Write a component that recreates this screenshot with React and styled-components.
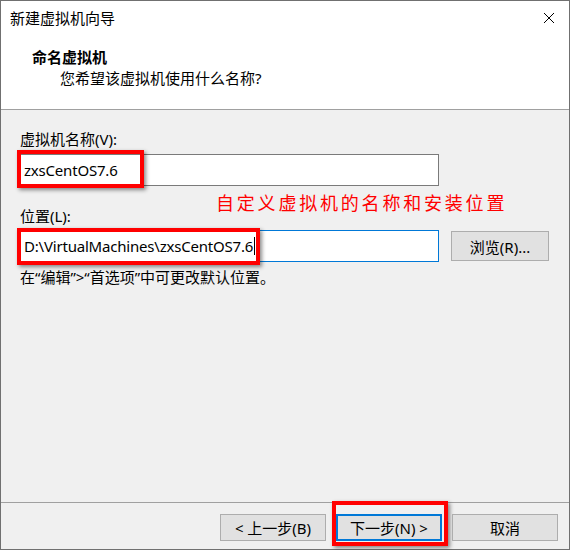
import styled, { createGlobalStyle } from "styled-components";

const GlobalStyle = createGlobalStyle`
  html, body {
    margin: 0;
    padding: 0;
    background: #ffffff;
  }
  body {
    font-family: "Noto Sans", "Noto Sans CJK SC", sans-serif;
    font-size: 15px;
    color: #000;
  }
`;

const Window = styled.div`
  width: 570px;
  height: 550px;
  box-sizing: border-box;
  border: 1px solid #707070;
  display: flex;
  flex-direction: column;
  background: #f0f0f0;
`;

const Header = styled.div`
  background: #ffffff;
  height: 108px;
  border-bottom: 1px solid #a0a0a0;
`;

const TitleBar = styled.div`
  height: 33px;
  display: flex;
  align-items: center;
  justify-content: space-between;
  padding: 0 14px 0 9px;
`;

const Title = styled.span`
  font-size: 15px;
  line-height: 20px;
`;

const Heading = styled.div`
  margin: 13px 0 0 31px;
  font-weight: 700;
  line-height: 20px;
`;

const Subtitle = styled.div`
  margin: 1px 0 0 59px;
  line-height: 20px;
`;

const Body = styled.div`
  position: relative;
  flex: 1;
  padding: 19px 20px 0 19px;
  display: flex;
  flex-direction: column;
`;

const Label = styled.div`
  line-height: 20px;
  margin-top: ${(p) => p.gap || 0}px;
`;

const FieldRow = styled.div`
  display: flex;
  align-items: center;
  gap: 12px;
  margin-top: ${(p) => p.gap || 0}px;
`;

const Field = styled.div`
  position: relative;
  width: 419px;
  height: 32px;
  box-sizing: border-box;
  border: 1px solid ${(p) => (p.focused ? "#0078d7" : "#7a7a7a")};
  background: #fff;
  display: flex;
  align-items: center;
  padding-left: 3px;
  line-height: 20px;
  letter-spacing: -0.2px;
`;

const Caret = styled.span`
  display: inline-block;
  width: 1px;
  height: 18px;
  background: #000;
  margin-left: 1px;
`;

const Button = styled.button`
  position: relative;
  width: ${(p) => p.width || 106}px;
  height: ${(p) => p.height || 27}px;
  box-sizing: border-box;
  background: #e1e1e1;
  border: ${(p) => (p.primary ? "2px solid #0078d7" : "1px solid #adadad")};
  font-family: inherit;
  font-size: 15px;
  color: #000;
  padding: 0;
  display: flex;
  align-items: center;
  justify-content: center;
`;

const Hint = styled.div`
  line-height: 20px;
  margin-top: 5px;
`;

const Footer = styled.div`
  height: 47px;
  border-top: 1px solid #a0a0a0;
  display: flex;
  justify-content: flex-end;
  align-items: flex-start;
  gap: 10px;
  padding: 11px 11px 0 0;
  box-sizing: border-box;
`;

const RedBox = styled.div`
  position: absolute;
  left: ${(p) => p.x}px;
  top: ${(p) => p.y}px;
  width: ${(p) => p.w}px;
  height: ${(p) => p.h}px;
  box-sizing: border-box;
  border: 4px solid #ff0000;
  box-shadow: 2px 2px 4px rgba(0, 0, 0, 0.45);
  pointer-events: none;
`;

const Note = styled.div`
  position: absolute;
  left: 215px;
  top: 80px;
  color: #ff0000;
  font-family: "Noto Sans CJK SC", sans-serif;
  font-size: 18px;
  line-height: 24px;
  letter-spacing: 2.8px;
`;

const CloseIcon = () => (
  <svg width="12" height="12" viewBox="0 0 12 12">
    <path d="M1 1 L11 11 M11 1 L1 11" stroke="#000" strokeWidth="1" />
  </svg>
);

export default function App() {
  return (
    <>
      <GlobalStyle />
      <Window>
        <Header>
          <TitleBar>
            <Title>新建虚拟机向导</Title>
            <CloseIcon />
          </TitleBar>
          <Heading>命名虚拟机</Heading>
          <Subtitle>您希望该虚拟机使用什么名称?</Subtitle>
        </Header>
        <Body>
          <Label>虚拟机名称(V):</Label>
          <FieldRow gap={5}>
            <Field>
              zxsCentOS7.6
              <RedBox x={-4} y={-5} w={127} h={38} />
            </Field>
          </FieldRow>
          <Note>自定义虚拟机的名称和安装位置</Note>
          <Label gap={20}>位置(L):</Label>
          <FieldRow gap={4}>
            <Field focused>
              D:\VirtualMachines\zxsCentOS7.6
              <Caret />
              <RedBox x={-4} y={-3} w={243} h={37} />
            </Field>
            <Button width={98} height={30}>
              浏览(R)...
            </Button>
          </FieldRow>
          <Hint>在“编辑”&gt;“首选项”中可更改默认位置。</Hint>
        </Body>
        <Footer>
          <Button>&lt; 上一步(B)</Button>
          <Button primary>
            下一步(N) &gt;
            <RedBox x={-6} y={-15} w={116} h={45} />
          </Button>
          <Button>取消</Button>
        </Footer>
      </Window>
    </>
  );
}
